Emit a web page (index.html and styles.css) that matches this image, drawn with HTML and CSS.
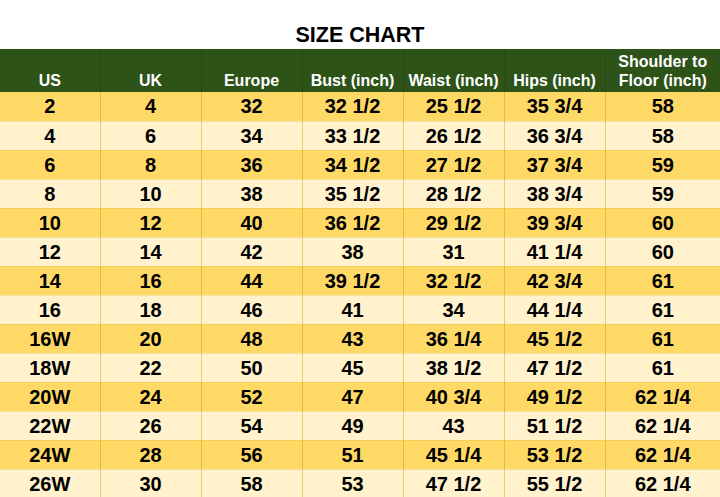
FILE: index.html
```html
<!DOCTYPE html>
<html>
<head>
<meta charset="utf-8">
<link rel="stylesheet" href="styles.css">
</head>
<body>
<h1 class="title">SIZE CHART</h1>
<table class="chart">
  <colgroup>
    <col class="c1"><col class="c2"><col class="c3"><col class="c4"><col class="c5"><col class="c6"><col class="c7">
  </colgroup>
  <thead>
    <tr>
      <th>US</th><th>UK</th><th>Europe</th><th>Bust (inch)</th><th>Waist (inch)</th><th>Hips (inch)</th><th>Shoulder to<br>Floor (inch)</th>
    </tr>
  </thead>
  <tbody>
    <tr class="dark"><td>2</td><td>4</td><td>32</td><td>32 1/2</td><td>25 1/2</td><td>35 3/4</td><td>58</td></tr>
    <tr class="light"><td>4</td><td>6</td><td>34</td><td>33 1/2</td><td>26 1/2</td><td>36 3/4</td><td>58</td></tr>
    <tr class="dark"><td>6</td><td>8</td><td>36</td><td>34 1/2</td><td>27 1/2</td><td>37 3/4</td><td>59</td></tr>
    <tr class="light"><td>8</td><td>10</td><td>38</td><td>35 1/2</td><td>28 1/2</td><td>38 3/4</td><td>59</td></tr>
    <tr class="dark"><td>10</td><td>12</td><td>40</td><td>36 1/2</td><td>29 1/2</td><td>39 3/4</td><td>60</td></tr>
    <tr class="light"><td>12</td><td>14</td><td>42</td><td>38</td><td>31</td><td>41 1/4</td><td>60</td></tr>
    <tr class="dark"><td>14</td><td>16</td><td>44</td><td>39 1/2</td><td>32 1/2</td><td>42 3/4</td><td>61</td></tr>
    <tr class="light"><td>16</td><td>18</td><td>46</td><td>41</td><td>34</td><td>44 1/4</td><td>61</td></tr>
    <tr class="dark"><td>16W</td><td>20</td><td>48</td><td>43</td><td>36 1/4</td><td>45 1/2</td><td>61</td></tr>
    <tr class="light"><td>18W</td><td>22</td><td>50</td><td>45</td><td>38 1/2</td><td>47 1/2</td><td>61</td></tr>
    <tr class="dark"><td>20W</td><td>24</td><td>52</td><td>47</td><td>40 3/4</td><td>49 1/2</td><td>62 1/4</td></tr>
    <tr class="light"><td>22W</td><td>26</td><td>54</td><td>49</td><td>43</td><td>51 1/2</td><td>62 1/4</td></tr>
    <tr class="dark"><td>24W</td><td>28</td><td>56</td><td>51</td><td>45 1/4</td><td>53 1/2</td><td>62 1/4</td></tr>
    <tr class="light"><td>26W</td><td>30</td><td>58</td><td>53</td><td>47 1/2</td><td>55 1/2</td><td>62 1/4</td></tr>
  </tbody>
</table>
</body>
</html>
```

FILE: styles.css
```css
html, body {
  margin: 0;
  padding: 0;
  background: #ffffff;
  font-family: "Liberation Sans", Arial, sans-serif;
  color: #000000;
}

.title {
  margin: 0;
  padding-top: 23px;
  height: 26px;
  line-height: 24px;
  font-size: 21.5px;
  font-weight: bold;
  text-align: center;
}

.chart {
  width: 720px;
  border-collapse: collapse;
  table-layout: fixed;
}

.c1 { width: 100px; }
.c2, .c3, .c4, .c5, .c6 { width: 101px; }
.c7 { width: 115px; }

.chart th {
  background: #2d5318;
  color: #ffffff;
  font-size: 16px;
  font-weight: bold;
  line-height: 19px;
  height: 43px;
  box-sizing: border-box;
  padding: 0 0 2px 0;
  vertical-align: bottom;
  text-align: center;
  border-right: 1px solid #284a15;
}

.chart td {
  height: 29px;
  box-sizing: border-box;
  padding: 0;
  font-size: 20px;
  font-weight: bold;
  text-align: center;
  vertical-align: middle;
  line-height: 22px;
  border-right: 1px solid rgba(200, 150, 20, 0.45);
  border-bottom: 1px solid rgba(220, 170, 40, 0.25);
}

.chart th:last-child, .chart td:last-child {
  border-right: none;
}

.dark td { background: #ffd966; }
.light td { background: #fff2cc; }
```
